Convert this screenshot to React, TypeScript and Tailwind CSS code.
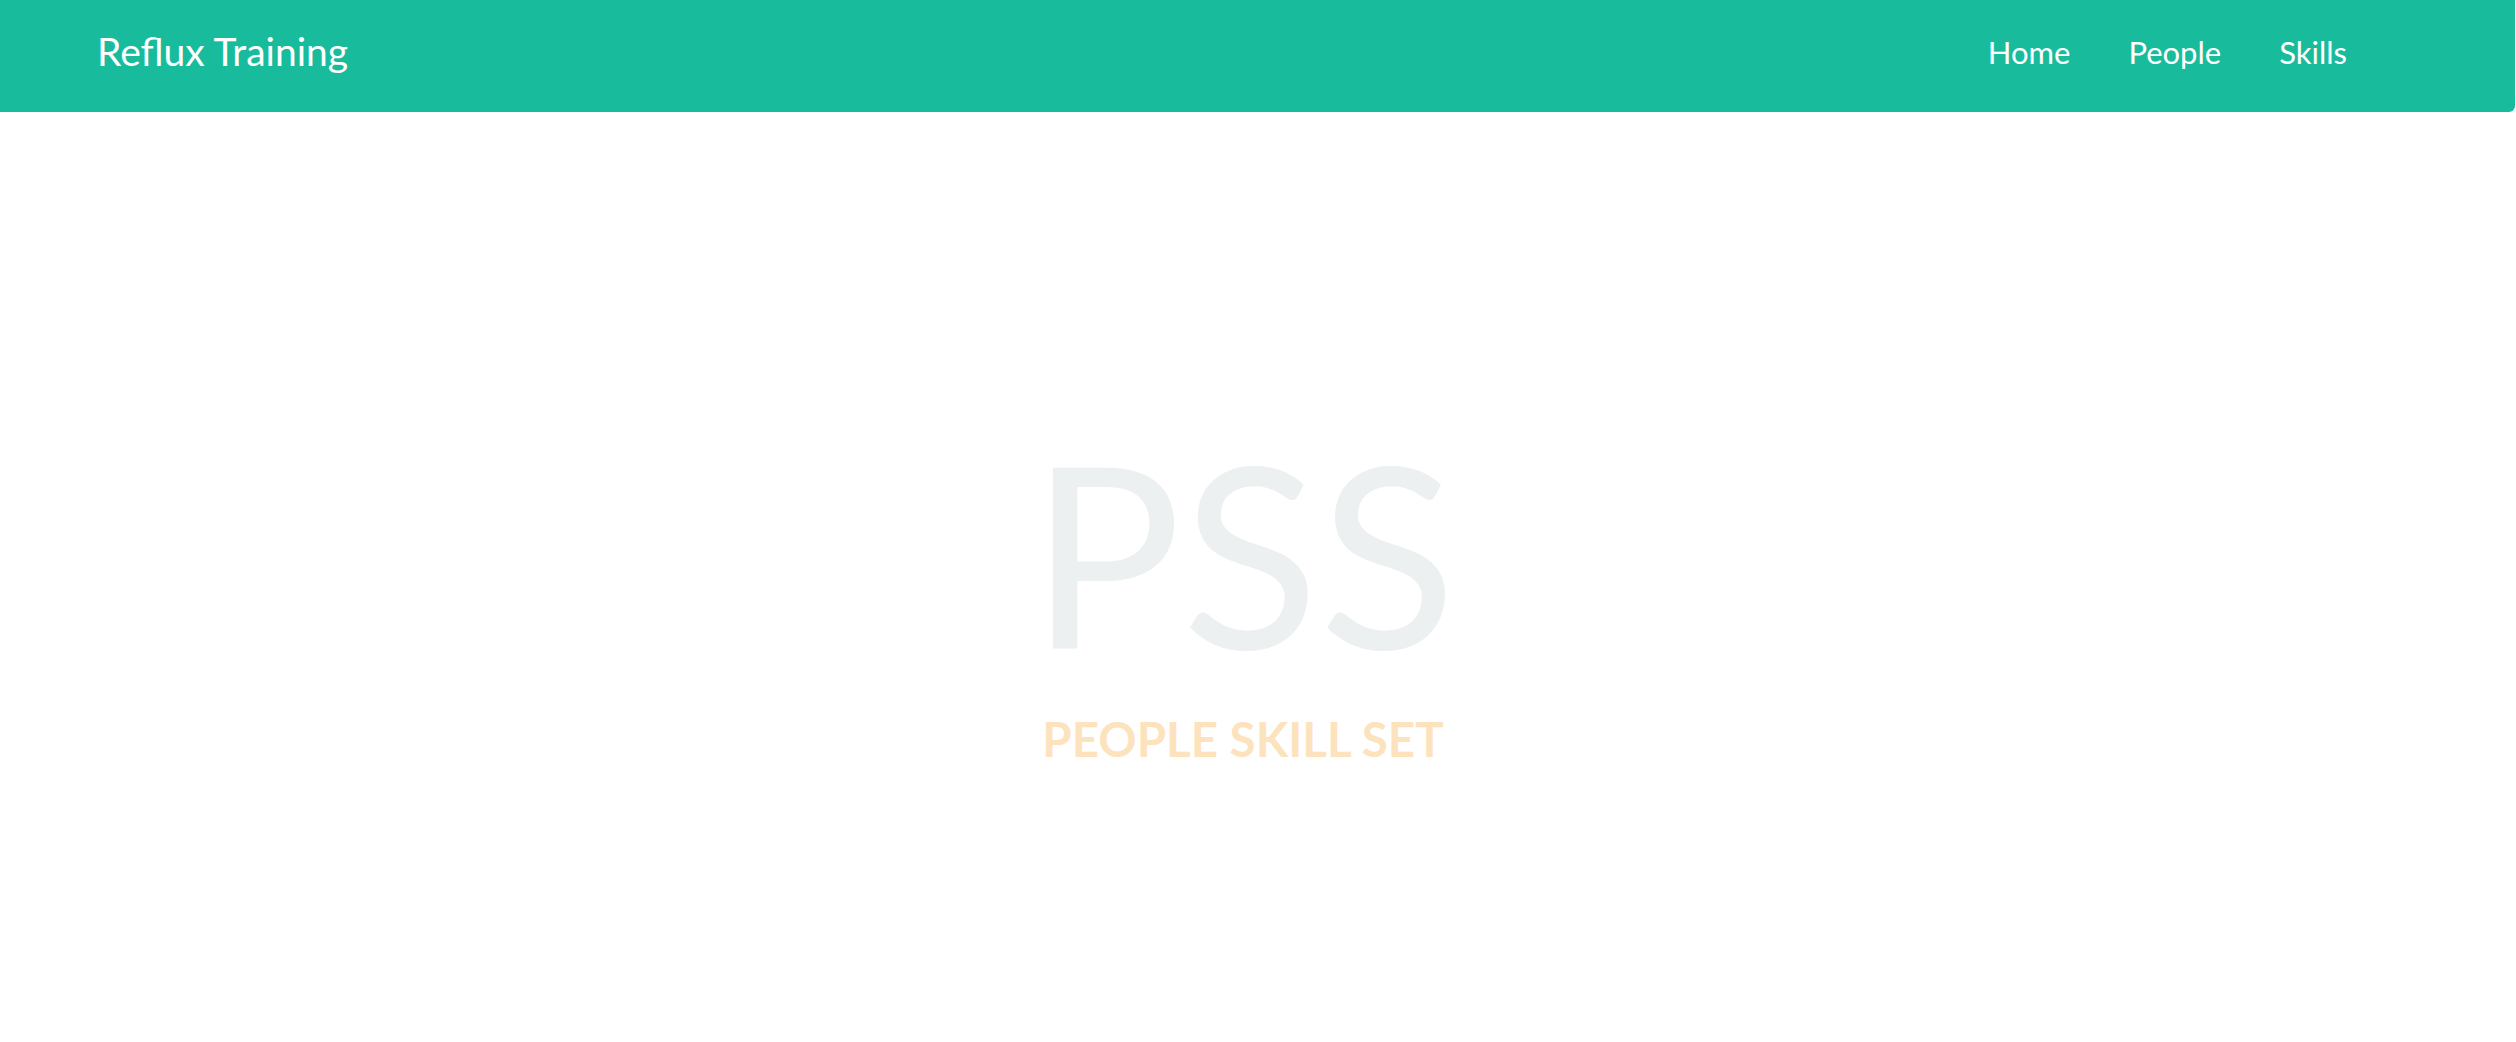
export default function App() {
  return (
    <div className="min-h-[1042px] bg-white" style={{ fontFamily: "Lato, 'Open Sans', sans-serif" }}>
      <nav className="flex h-[112px] w-[2515px] items-center justify-between rounded-br-[6px] bg-[#18bc9c] pl-[97px] pr-[168px] text-white">
        <a className="mb-[10px] text-[39px] font-normal leading-none">Reflux Training</a>
        <ul className="mb-[8px] flex items-center gap-[58px] text-[31px] font-normal leading-none">
          <li>Home</li>
          <li>People</li>
          <li>Skills</li>
        </ul>
      </nav>
      <main className="flex flex-col items-center pr-[30px] pt-[313px] text-center">
        <h1 className="text-[253px] font-normal leading-none text-[#ecf0f1]">PSS</h1>
        <h2 className="mt-[37px] text-[47.5px] font-bold leading-none text-[#fde3bd]">PEOPLE SKILL SET</h2>
      </main>
    </div>
  );
}
